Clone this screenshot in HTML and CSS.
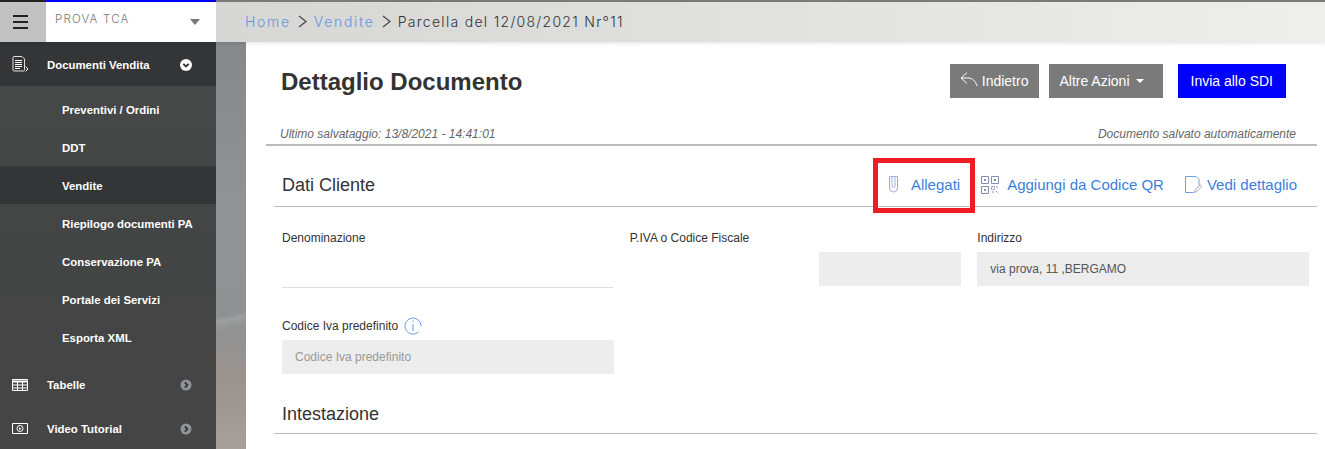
FILE: index.html
```html
<!DOCTYPE html>
<html lang="it">
<head>
<meta charset="UTF-8" />
<meta name="viewport" content="width=device-width, initial-scale=1" />
<title>Dettaglio Documento</title>
<link rel="stylesheet" href="styles.css">
</head>
<body>
  <header class="topbar">
    <button class="burger" type="button" aria-label="Menu"><span></span><span></span><span></span></button>
    <div class="company">
      <span>PROVA TCA</span>
      <i class="company-caret"></i>
    </div>
    <nav class="crumbs">
      <a href="#">Home</a>
      <svg width="9" height="13" viewBox="0 0 9 13" fill="none" stroke="#444" stroke-width="1.200"><path d="M1 1l7 5.500L1 12"/></svg>
      <a href="#">Vendite</a>
      <svg width="9" height="13" viewBox="0 0 9 13" fill="none" stroke="#444" stroke-width="1.200"><path d="M1 1l7 5.500L1 12"/></svg>
      <span>Parcella del 12/08/2021 Nr°11</span>
    </nav>
  </header>

  <div class="page">
    <div class="rail">
      <aside class="sidebar">
        <a class="menu-item open" href="#">
          <svg class="menu-icon" width="17" height="17" viewBox="0 0 17 17" fill="none" stroke="#fff" stroke-width="1"><path d="M1 1.500C1 1 1.500.5 2 .5h8l2.500 2.500v11c0 .5-.5 1-1 1H2c-.5 0-1-.5-1-1z" stroke="#ddd"/><path d="M3 4.500h7M3 6.500h7M3 8.500h7M3 10.500h7M3 12.500h5" stroke-width="1.100"/><path d="M13.500 10.500l2.500 2.500-2.500 2.500"/></svg>
          <span>Documenti Vendita</span>
          <svg class="menu-arrow" width="12" height="12" viewBox="0 0 12 12"><circle cx="6" cy="6" r="6" fill="#fff"/><path d="M3.300 4.800 6 7.500l2.700-2.700" fill="none" stroke="#333" stroke-width="1.800"/></svg>
        </a>
        <ul class="submenu">
          <li><a href="#">Preventivi / Ordini</a></li>
          <li><a href="#">DDT</a></li>
          <li class="current"><a href="#">Vendite</a></li>
          <li><a href="#">Riepilogo documenti PA</a></li>
          <li><a href="#">Conservazione PA</a></li>
          <li><a href="#">Portale dei Servizi</a></li>
          <li><a href="#">Esporta XML</a></li>
        </ul>
        <a class="menu-item" href="#">
          <svg class="menu-icon" width="17" height="13" viewBox="0 0 17 13" fill="none" stroke="#fff" stroke-width="1"><path d="M.5.500h15v11h-15z"/><path d="M.5 2.500h15" stroke-width="2"/><path d="M.5 6h15M.5 9h15M5.500 3v9M10.500 3v9"/></svg>
          <span>Tabelle</span>
          <svg class="menu-arrow" width="12" height="12" viewBox="0 0 12 12"><circle cx="6" cy="6" r="5.500" fill="#8f949b"/><path d="M4.800 3.300 7.500 6 4.800 8.700" fill="none" stroke="#333" stroke-width="1.800"/></svg>
        </a>
        <a class="menu-item" href="#">
          <svg class="menu-icon" width="17" height="12" viewBox="0 0 17 12" fill="none" stroke="#fff" stroke-width="1"><path d="M.5.500h15v10h-15z"/><circle cx="8" cy="5.500" r="3"/><path d="M7 4.500l2.500 1.200L7 7z" fill="#fff" stroke="none"/></svg>
          <span>Video Tutorial</span>
          <svg class="menu-arrow" width="12" height="12" viewBox="0 0 12 12"><circle cx="6" cy="6" r="5.500" fill="#8f949b"/><path d="M4.800 3.300 7.500 6 4.800 8.700" fill="none" stroke="#333" stroke-width="1.800"/></svg>
        </a>
      </aside>
    </div>

    <main class="content">
      <div class="doc-head">
        <h1>Dettaglio Documento</h1>
        <div class="doc-actions">
          <a class="btn btn-grey btn-back" href="#">
            <svg width="18" height="15" viewBox="0 0 18 15" fill="none" stroke="#fff" stroke-width="1"><path d="M7 .7 1 6l6 5.500M1 6h7c4.500 0 7.500 3 9 8"/></svg>
            Indietro
          </a>
          <a class="btn btn-grey btn-more" href="#">Altre Azioni <i class="caret"></i></a>
          <a class="btn btn-blue" href="#">Invia allo SDI</a>
        </div>
      </div>

      <div class="save-row">
        <span>Ultimo salvataggio: 13/8/2021 - 14:41:01</span>
        <span>Documento salvato automaticamente</span>
      </div>

      <section class="block">
        <div class="block-title">
          <h2>Dati Cliente</h2>
          <div class="block-links">
            <a class="link link-marked" href="#">
              <svg width="12" height="17" viewBox="0 0 12 17" fill="none" stroke="#b09fd8" stroke-width="1"><path d="M1.500.5v11.500a4 4 0 0 0 8 0V.5"/><path d="M1.500.5h8M4 .5v9.500a1.500 1.500 0 0 0 3 0V.5" stroke="#9bb4e6"/></svg>
              Allegati
            </a>
            <a class="link link-qr" href="#">
              <svg width="18" height="18" viewBox="0 0 18 18" fill="none" stroke="#7f8fb0" stroke-width="1"><path d="M.5.500h7v7h-7zM10.500.500h7v7h-7zM.5 10.500h7v7h-7z"/><path d="M3 3h2v2H3zM13 3h2v2h-2zM3 13h2v2H3z" fill="#7f8fb0" stroke="none"/><path d="M10.500 10.500h3v3h-3zM15 11h2.500M15 15l2.500 2.500M11 16h3" stroke-dasharray="2 1"/></svg>
              Aggiungi da Codice QR
            </a>
            <a class="link link-view" href="#">
              <svg width="17" height="18" viewBox="0 0 17 18" fill="none" stroke="#6d9fe6" stroke-width="1"><path d="M8.500 16.500H.5V.5h10.500l3 3v5.500"/><path d="M9.500 16.500l.8-2.800 5-5 1.700 1.700-5 5z" stroke="#a4a9b8"/></svg>
              Vedi dettaglio
            </a>
          </div>
        </div>

        <div class="fields">
          <div class="field">
            <label>Denominazione</label>
            <div class="line-input"></div>
          </div>
          <div class="field">
            <label>P.IVA o Codice Fiscale</label>
            <div class="box-input box-short"></div>
          </div>
          <div class="field">
            <label>Indirizzo</label>
            <div class="box-input">via prova, 11 ,BERGAMO</div>
          </div>
          <div class="field field-iva">
            <label>Codice Iva predefinito
              <svg width="18" height="18" viewBox="0 0 18 18" fill="none" stroke="#5b9be8" stroke-width="1"><path d="M14.700 14.700A8 8 0 1 1 17 9"/><path d="M9 7v7M9 3.500v1.500"/></svg>
            </label>
            <div class="box-input placeholder">Codice Iva predefinito</div>
          </div>
        </div>
      </section>

      <section class="block">
        <div class="block-title block-title-second">
          <h2>Intestazione</h2>
        </div>
      </section>
    </main>
  </div>
</body>
</html>
```

FILE: styles.css
```css
html, body {
  height: 100%;
}
body {
  margin: 0;
  height: 449px;
  overflow: hidden;
  background: #fff;
  color: #333;
  font-family: "Liberation Sans", Arial, sans-serif;
  font-size: 12px;
}
a {
  color: inherit;
  text-decoration: none;
}

/* top bar */
.topbar {
  display: flex;
  height: 42px;
  box-sizing: border-box;
  border-top: 2px solid #7a7a7a;
  background: linear-gradient(90deg, #d3d3d2 0%, #dcdcda 40%, #eeeeec 100%);
  box-shadow: 0 1px 4px rgba(0,0,0,0.12);
  position: relative;
}
.burger {
  width: 46px;
  margin-top: -2px;
  border: none;
  border-top: 2px solid #222;
  padding: 0 5px 0 0;
  background: #c1c1c1;
  display: flex;
  flex-direction: column;
  align-items: center;
  justify-content: center;
  gap: 4px;
}
.burger span {
  display: block;
  width: 15px;
  height: 2px;
  background: #222;
}
.company {
  width: 170px;
  margin-top: -2px;
  box-sizing: border-box;
  border-top: 2px solid #0000ff;
  padding: 10px 16px 0 9px;
  background: #fff;
  display: flex;
  justify-content: space-between;
  font-family: Inter, sans-serif;
  font-weight: 300;
  font-size: 11.500px;
  letter-spacing: 1.200px;
  color: #777;
}
.company-caret {
  margin-top: 7px;
  width: 0;
  height: 0;
  border-left: 5px solid transparent;
  border-right: 5px solid transparent;
  border-top: 6px solid #777;
}
.crumbs {
  display: flex;
  align-items: center;
  gap: 7px;
  padding: 0 0 2px 29px;
  font-family: Inter, sans-serif;
  font-weight: 300;
  font-size: 14px;
  letter-spacing: 1.300px;
  color: #333;
}
.crumbs a {
  color: #5f97e0;
  letter-spacing: 1.700px;
}

/* page */
.page {
  display: flex;
  height: 407px;
}
.rail {
  width: 246px;
  flex: none;
  background:
    linear-gradient(168deg, transparent 70%, rgba(255,255,255,0.12) 71%, transparent 73%),
    linear-gradient(180deg, #85898b 0%, #8f9395 40%, #8f9293 68%, #9b938f 84%, #a6a09c 100%);
}
.sidebar {
  width: 216px;
  height: 100%;
  background: linear-gradient(180deg, #474848 0%, #434444 50%, #444544 100%);
  color: #fff;
  font-weight: 700;
  font-size: 11.400px;
  overflow: hidden;
}
.menu-item {
  display: flex;
  align-items: center;
  height: 44px;
  box-sizing: border-box;
  padding: 0 24px 0 12px;
}
.menu-item.open {
  background: #343536;
  padding-top: 1px;
}
.menu-item span {
  flex: 1;
}
.menu-icon {
  margin-right: 18px;
  flex: none;
}
.submenu {
  list-style: none;
  margin: 0;
  padding: 4px 0 7px;
}
.submenu a {
  display: flex;
  align-items: center;
  height: 38px;
  padding-left: 62px;
  padding-top: 1px;
  box-sizing: border-box;
}
.submenu .current {
  background: #343536;
}

/* content */
.content {
  flex: 1;
  min-width: 0;
  padding: 0 8px 0 20px;
}
.doc-head {
  display: flex;
  align-items: center;
  justify-content: space-between;
  height: 34px;
  margin-top: 22px;
  padding: 0 31px 0 15px;
}
h1 {
  margin: 2px 0 0;
  font-size: 24px;
  color: #333;
}
.doc-actions {
  display: flex;
}
.btn {
  display: flex;
  align-items: center;
  height: 34px;
  box-sizing: border-box;
  color: #fff;
  font-size: 14px;
}
.btn-grey {
  background: #7a7a7a;
}
.btn-blue {
  background: #0000ff;
  padding: 0 13px;
  margin-left: 15px;
}
.btn-back {
  padding: 0 11px 0 10px;
  gap: 4px;
  margin-right: 10px;
}
.btn-back svg {
  margin-top: -4px;
}
.btn-more {
  padding: 0 19px 0 10px;
}
.caret {
  margin-left: 6px;
  width: 0;
  height: 0;
  border-left: 4px solid transparent;
  border-right: 4px solid transparent;
  border-top: 4px solid #fff;
}
.save-row {
  display: flex;
  justify-content: space-between;
  margin-top: 30px;
  padding: 0 21px 3px 14px;
  border-bottom: 2px solid #bbb;
  font-size: 12px;
  font-style: italic;
  line-height: 13px;
  color: #666;
}
.block {
  margin-left: 8px;
}
.block-title {
  display: flex;
  align-items: center;
  justify-content: space-between;
  height: 42px;
  margin-top: 19px;
  padding: 0 20px 0 8px;
  border-bottom: 1px solid #bbb;
  box-sizing: border-box;
}
.block-title-second {
  margin-top: 18px;
  padding-top: 4px;
}
h2 {
  margin: 0;
  font-size: 18px;
  font-weight: 400;
  color: #333;
}
.block-links {
  display: flex;
  gap: 21px;
  align-items: center;
  margin-top: -2px;
}
.link {
  display: flex;
  align-items: center;
  gap: 8px;
  color: #3b7fdc;
  font-size: 15px;
}
.link-marked {
  position: relative;
  gap: 11px;
}
.link-view {
  gap: 5px;
}
/* red marker drawn over the screenshot */
.link-marked::after {
  content: "";
  position: absolute;
  left: -15px;
  top: -18px;
  width: 92px;
  height: 45px;
  border: 5px solid #ee1c25;
}
.fields {
  display: grid;
  grid-template-columns: repeat(3, 1fr);
  column-gap: 16px;
  padding: 24px 8px 0;
}
.field label {
  display: flex;
  align-items: center;
  gap: 6px;
  height: 14px;
  font-size: 12px;
  color: #333;
}
.line-input {
  height: 30px;
  margin-top: 12px;
  margin-right: 1px;
  border-bottom: 1px solid #ddd;
}
.box-input {
  height: 34px;
  margin-top: 7px;
  padding: 0 13px;
  box-sizing: border-box;
  background: #ededed;
  display: flex;
  align-items: center;
  font-size: 12px;
  color: #555;
}
.box-short {
  width: 142px;
  margin-left: auto;
}
.placeholder {
  color: #999;
}
.field-iva {
  margin-top: 31px;
}
```
